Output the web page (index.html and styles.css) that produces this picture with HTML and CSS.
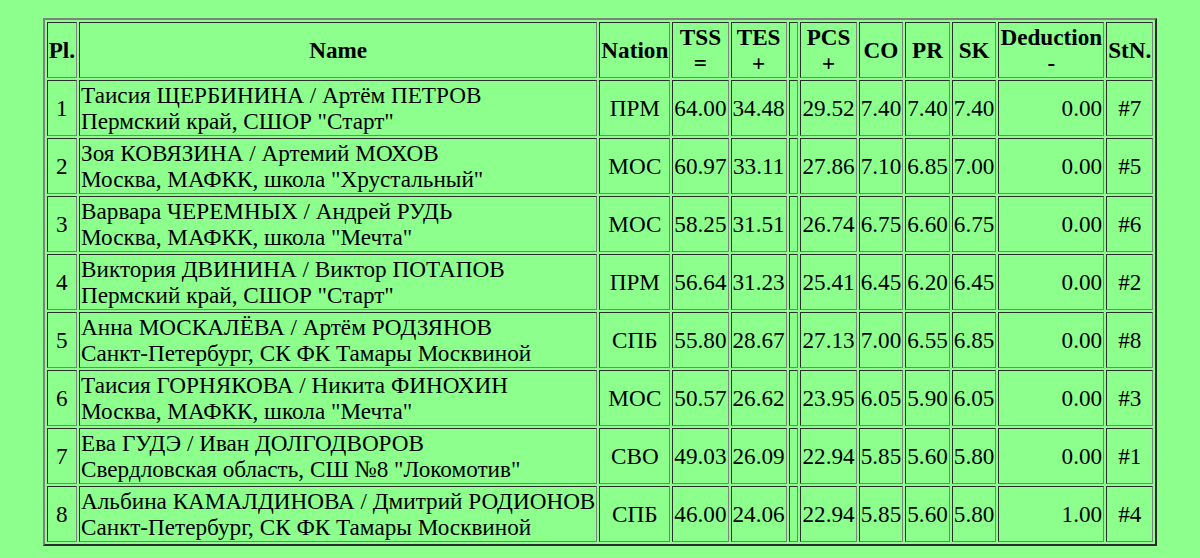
FILE: index.html
```html
<!DOCTYPE html>
<html>
<head>
<meta charset="utf-8">
<link rel="stylesheet" href="styles.css">
</head>
<body>
<table class="results">
<tr>
<th>Pl.</th><th>Name</th><th>Nation</th><th>TSS<br>=</th><th>TES<br>+</th><th class="gap">&nbsp;</th><th>PCS<br>+</th><th>CO</th><th>PR</th><th>SK</th><th class="ded">Deduction<br>-</th><th>StN.</th>
</tr>
<tr><td class="c">1</td><td class="name">Таисия ЩЕРБИНИНА / Артём ПЕТРОВ<br>Пермский край, СШОР "Старт"</td><td class="c">ПРМ</td><td class="c">64.00</td><td class="c">34.48</td><td></td><td class="c">29.52</td><td class="c">7.40</td><td class="c">7.40</td><td class="c">7.40</td><td class="r">0.00</td><td class="c">#7</td></tr>
<tr><td class="c">2</td><td class="name">Зоя КОВЯЗИНА / Артемий МОХОВ<br>Москва, МАФКК, школа "Хрустальный"</td><td class="c">МОС</td><td class="c">60.97</td><td class="c">33.11</td><td></td><td class="c">27.86</td><td class="c">7.10</td><td class="c">6.85</td><td class="c">7.00</td><td class="r">0.00</td><td class="c">#5</td></tr>
<tr><td class="c">3</td><td class="name">Варвара ЧЕРЕМНЫХ / Андрей РУДЬ<br>Москва, МАФКК, школа "Мечта"</td><td class="c">МОС</td><td class="c">58.25</td><td class="c">31.51</td><td></td><td class="c">26.74</td><td class="c">6.75</td><td class="c">6.60</td><td class="c">6.75</td><td class="r">0.00</td><td class="c">#6</td></tr>
<tr><td class="c">4</td><td class="name">Виктория ДВИНИНА / Виктор ПОТАПОВ<br>Пермский край, СШОР "Старт"</td><td class="c">ПРМ</td><td class="c">56.64</td><td class="c">31.23</td><td></td><td class="c">25.41</td><td class="c">6.45</td><td class="c">6.20</td><td class="c">6.45</td><td class="r">0.00</td><td class="c">#2</td></tr>
<tr><td class="c">5</td><td class="name">Анна МОСКАЛЁВА / Артём РОДЗЯНОВ<br>Санкт-Петербург, СК ФК Тамары Москвиной</td><td class="c">СПБ</td><td class="c">55.80</td><td class="c">28.67</td><td></td><td class="c">27.13</td><td class="c">7.00</td><td class="c">6.55</td><td class="c">6.85</td><td class="r">0.00</td><td class="c">#8</td></tr>
<tr><td class="c">6</td><td class="name">Таисия ГОРНЯКОВА / Никита ФИНОХИН<br>Москва, МАФКК, школа "Мечта"</td><td class="c">МОС</td><td class="c">50.57</td><td class="c">26.62</td><td></td><td class="c">23.95</td><td class="c">6.05</td><td class="c">5.90</td><td class="c">6.05</td><td class="r">0.00</td><td class="c">#3</td></tr>
<tr><td class="c">7</td><td class="name">Ева ГУДЭ / Иван ДОЛГОДВОРОВ<br>Свердловская область, СШ №8 "Локомотив"</td><td class="c">СВО</td><td class="c">49.03</td><td class="c">26.09</td><td></td><td class="c">22.94</td><td class="c">5.85</td><td class="c">5.60</td><td class="c">5.80</td><td class="r">0.00</td><td class="c">#1</td></tr>
<tr><td class="c">8</td><td class="name">Альбина КАМАЛДИНОВА / Дмитрий РОДИОНОВ<br>Санкт-Петербург, СК ФК Тамары Москвиной</td><td class="c">СПБ</td><td class="c">46.00</td><td class="c">24.06</td><td></td><td class="c">22.94</td><td class="c">5.85</td><td class="c">5.60</td><td class="c">5.80</td><td class="r">1.00</td><td class="c">#4</td></tr>
</table>
</body>
</html>
```
FILE: styles.css
```css
html, body {
  background: #8cff8c;
}
body {
  margin: 8px;
  font-family: "Liberation Serif", "Times New Roman", serif;
  font-size: 23.2px;
  color: #000;
}
.results {
  margin: 10px auto 0;
  border-collapse: separate;
  border-spacing: 2px;
  border: 2px outset #808080;
  line-height: 26px;
}
.results th,
.results td {
  border: 1px inset #808080;
  padding: 1px;
  vertical-align: middle;
}
.results th {
  font-weight: bold;
  text-align: center;
}
.results th.ded {
  vertical-align: top;
}
.c { text-align: center; }
.r { text-align: right; }
.name { text-align: left; white-space: nowrap; }
```
